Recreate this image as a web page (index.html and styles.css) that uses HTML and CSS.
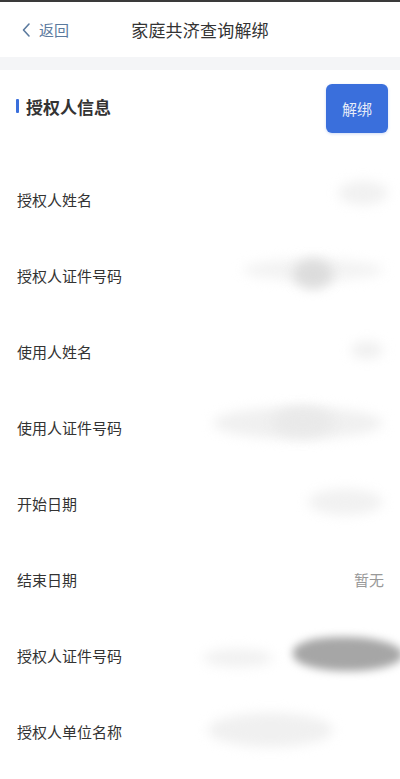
FILE: index.html
```html
<!DOCTYPE html>
<html lang="zh">
<head>
<meta charset="utf-8">
<link rel="stylesheet" href="styles.css">
</head>
<body>
<div class="topline"></div>
<header class="nav">
  <a class="back">
    <svg class="chev" width="10" height="16" viewBox="0 0 10 16"><path d="M8 2 L2.5 8 L8 14" fill="none" stroke="#5b7a9e" stroke-width="1.6" stroke-linecap="round" stroke-linejoin="round"/></svg>
    <span>返回</span>
  </a>
  <h1 class="title">家庭共济查询解绑</h1>
</header>
<div class="band"></div>
<main class="card">
  <div class="sec-head">
    <div class="sec-title"><i class="bar"></i>授权人信息</div>
    <button class="btn">解绑</button>
  </div>
  <div class="row"><span class="label">授权人姓名</span><span class="val"><i class="blob b1"></i></span></div>
  <div class="row"><span class="label">授权人证件号码</span><span class="val"><i class="blob b2a"></i><i class="blob b2b"></i></span></div>
  <div class="row"><span class="label">使用人姓名</span><span class="val"><i class="blob b3"></i></span></div>
  <div class="row"><span class="label">使用人证件号码</span><span class="val"><i class="blob b4"></i><i class="blob b4b"></i></span></div>
  <div class="row"><span class="label">开始日期</span><span class="val"><i class="blob b5"></i></span></div>
  <div class="row"><span class="label">结束日期</span><span class="val text">暂无</span></div>
  <div class="row"><span class="label">授权人证件号码</span><span class="val"><i class="blob b7a"></i><i class="blob b7b"></i></span></div>
  <div class="row"><span class="label">授权人单位名称</span><span class="val"><i class="blob b8"></i></span></div>
</main>
</body>
</html>
```
FILE: styles.css
```css
* { box-sizing: border-box; }
html, body { margin: 0; padding: 0; background: #fff; overflow: hidden; }
body {
  width: 400px; height: 779px;
  font-family: "Noto Sans CJK SC", "Noto Sans", sans-serif;
  color: #333;
}
.topline { height: 2px; background: #3a3a3a; }
.nav {
  height: 55px; position: relative;
  display: flex; align-items: center; justify-content: center;
  background: #fff;
}
.back {
  position: absolute; left: 21px; top: 0; bottom: 0;
  display: flex; align-items: center; gap: 8px;
  color: #5b7a9e; font-size: 15px;
}
.chev { display: block; }
.title { margin: 0; font-size: 17px; font-weight: 400; color: #333; letter-spacing: 0.2px; }
.band { height: 13px; background: #f4f5f7; }
.card { background: #fff; }
.sec-head {
  display: flex; justify-content: space-between; align-items: center;
  padding: 14px 12px 0 16px; height: 63px;
}
.sec-title {
  display: flex; align-items: center; gap: 7px;
  font-size: 17px; font-weight: 700; color: #333; margin-top: -5px;
}
.bar { display: block; width: 3px; height: 14px; background: #3a6fdc; border-radius: 1px; }
.btn {
  width: 62px; height: 49px; border: none; border-radius: 6px;
  background: #3a6fdc; color: #e6ecf8; font-size: 15px;
  font-family: inherit; padding: 0;
  box-shadow: 0 1px 3px rgba(58,111,220,0.25);
}
.row {
  height: 76px; display: flex; align-items: center; justify-content: space-between;
  padding: 0 17px;
}
.sec-head + .row { margin-top: 28px; }
.label { font-size: 15px; color: #333; }
.val { position: relative; flex: 1; height: 76px; }
.val.text {
  flex: none; height: auto; font-size: 15px; color: #999;
  margin-right: -1px;
}
.blob { position: absolute; display: block; border-radius: 50%; filter: blur(6px); }
.b1 { right: -5px; top: 20px; width: 50px; height: 24px; background: #f1f1f1; }
.b2a { right: 0; top: 22px; width: 140px; height: 22px; background: #f3f3f3; }
.b2b { right: 50px; top: 22px; width: 40px; height: 30px; background: #dcdcdc; }
.b3 { right: 0; top: 28px; width: 32px; height: 18px; background: #f0f0f0; }
.b4 { right: 0; top: 18px; width: 170px; height: 32px; background: #f0f0f0; }
.b4b { right: 50px; top: 18px; width: 60px; height: 30px; background: #e9e9e9; }
.b5 { right: 0; top: 24px; width: 75px; height: 26px; background: #f1f1f1; }
.b7a { right: 110px; top: 32px; width: 70px; height: 18px; background: #f1f1f1; }
.b7b { right: -20px; top: 20px; width: 110px; height: 34px; background: #a6a6a6; filter: blur(4px); border-radius: 45% 55% 50% 50%; }
.b8 { right: 50px; top: 20px; width: 125px; height: 34px; background: #f0f0f0; }
```
